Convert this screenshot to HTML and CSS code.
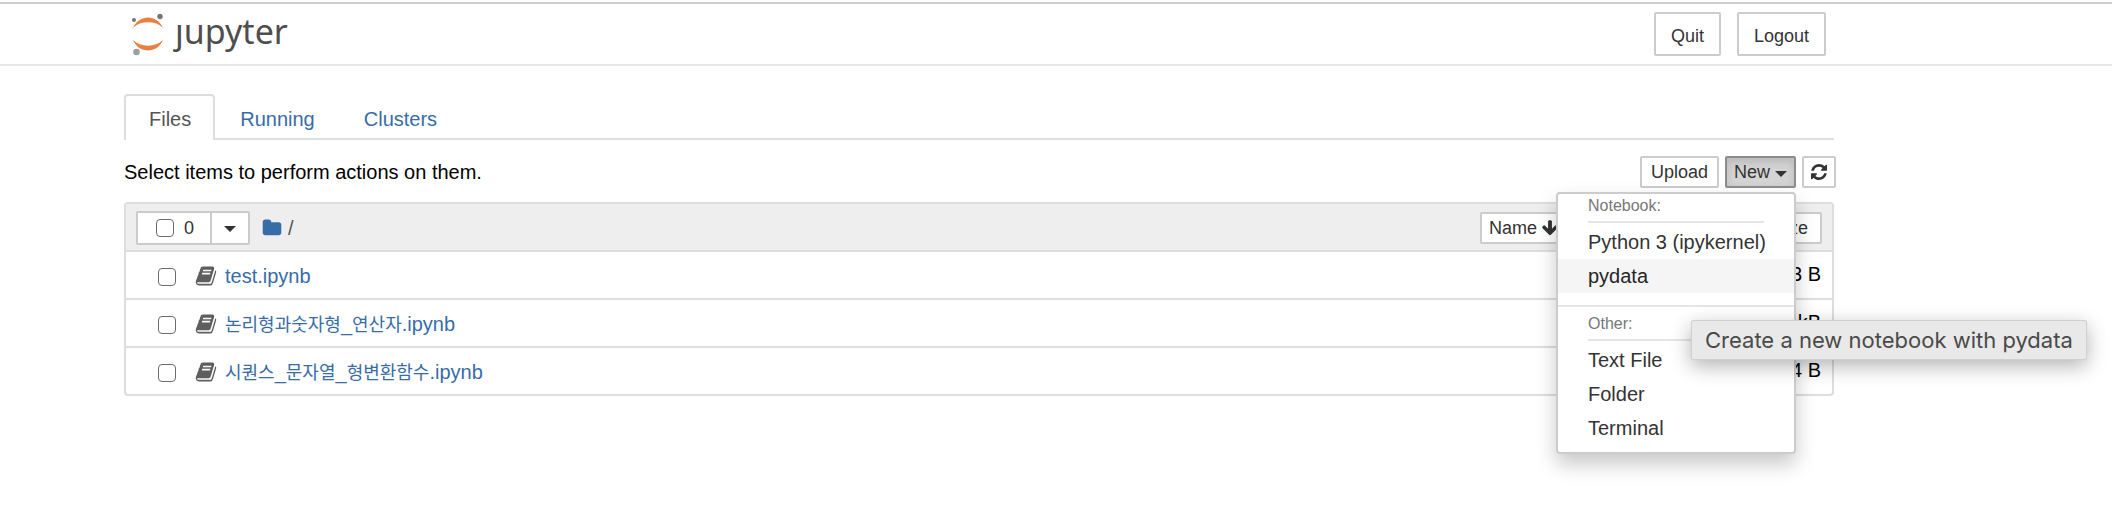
FILE: index.html
```html
<!DOCTYPE html>
<html lang="en">
<head>
<meta charset="utf-8">
<title>Home Page - Select or create a notebook</title>
<link rel="stylesheet" href="styles.css">
</head>
<body>
<svg class="sprite" aria-hidden="true">
  <symbol id="book" viewBox="0 0 1792 1792"><path d="M1703 478q40 57 18 129l-275 906q-19 64-76.500 107.500t-122.500 43.500h-923q-77 0-148.500-53.500t-99.500-131.500q-24-67-2-127 0-4 3-27t4-37q1-8-3-21.500t-3-19.500q2-11 8-21t16.500-23.500 16.500-23.500q23-38 45-91.500t30-91.500q3-10 .5-30t-.5-28q3-11 17-28t17-23q21-36 42-92t25-90q1-9-2.500-32t.5-28q4-13 22-30.500t22-22.500q19-26 42.500-84.500t27.500-96.500q1-8-3-25.500t-2-26.500q2-8 9-18t18-23 17-21q8-12 16.500-30.500t15-35 16-36 19.500-32 26.500-23.500 36-11.500 47.500 5.500l-1 3q38-9 51-9h761q74 0 114 56t18 130l-274 906q-36 119-71.500 153.500t-128.500 34.500h-869q-27 0-38 15-11 16-1 43 24 70 144 70h923q29 0 56-15.500t35-41.500l300-987q7-22 5-57 38 15 59 43zm-1064 2q-4 13 2 22.500t20 9.500h608q13 0 25.500-9.500t16.500-22.500l21-64q4-13-2-22.500t-20-9.500h-608q-13 0-25.500 9.500t-16.500 22.500zm-83 256q-4 13 2 22.500t20 9.500h608q13 0 25.500-9.500t16.500-22.500l21-64q4-13-2-22.500t-20-9.500h-608q-13 0-25.500 9.500t-16.500 22.500z"/></symbol>
</svg>

<header class="header">
  <a class="logo" href="#" aria-label="jupyter">
    <svg class="logo-mark" viewBox="0 0 34 44" aria-hidden="true">
      <path fill="#e78040" d="M2 15C5 8 11 4.500 17 4.500S29 8 32 15C28 11 23 9.300 17 9.300S6 11 2 15Z"/>
      <path fill="#e78040" d="M2 27C5 34 11 37.500 17 37.500S29 34 32 27C28 31 23 32.700 17 32.700S6 31 2 27Z"/>
      <circle cx="3" cy="7" r="2" fill="#767677"/>
      <circle cx="29" cy="3.500" r="2.700" fill="#767677"/>
      <circle cx="5.500" cy="39" r="3.300" fill="#9e9e9e"/>
    </svg>
    <span class="logo-word">ȷupyter</span>
  </a>
  <div class="header-actions">
    <button class="btn btn-large" type="button">Quit</button>
    <button class="btn btn-large" type="button">Logout</button>
  </div>
</header>

<main class="content">
  <nav class="tabs">
    <a class="tab tab-active" href="#files">Files</a>
    <a class="tab" href="#running">Running</a>
    <a class="tab" href="#clusters">Clusters</a>
  </nav>

  <div class="toolbar">
    <p class="hint">Select items to perform actions on them.</p>
    <div class="toolbar-actions">
      <button class="btn btn-upload" type="button">Upload</button>
      <div class="dropdown">
        <button class="btn btn-open" type="button" aria-expanded="true">New<span class="caret"></span></button>
        <div class="menu">
          <div class="menu-title">Notebook:</div>
          <a class="menu-item" href="#">Python 3 (ipykernel)</a>
          <a class="menu-item menu-hover" href="#">pydata<span class="tooltip" role="tooltip">Create a new notebook with pydata</span></a>
          <div class="menu-divider"></div>
          <div class="menu-title">Other:</div>
          <a class="menu-item" href="#">Text File</a>
          <a class="menu-item" href="#">Folder</a>
          <a class="menu-item" href="#">Terminal</a>
        </div>
      </div>
      <button class="btn btn-icon" type="button" aria-label="Refresh">
        <svg width="16" height="16" viewBox="0 0 1536 1536" fill="currentColor"><path d="M1511 928q0 5-1 7-64 268-268 434.500T764 1536q-146 0-282.500-55T238 1324l-129 129q-19 19-45 19t-45-19-19-45V960q0-26 19-45t45-19h448q26 0 45 19t19 45-19 45l-137 137q71 66 161 102t187 36q134 0 250-65t186-179q11-17 53-117 8-23 30-23h192q13 0 22.500 9.500t9.500 22.500zm25-800v448q0 26-19 45t-45 19h-448q-26 0-45-19t-19-45 19-45l138-138Q969 256 768 256q-134 0-250 65T332 500q-11 17-53 117-8 23-30 23H50q-13 0-22.500-9.500T18 608v-7q65-268 270-434.500T768 0q146 0 284 55.500T1297 212l130-129q19-19 45-19t45 19 19 45z"/></svg>
      </button>
    </div>
  </div>

  <section class="list">
    <div class="row list-header">
      <div class="selector">
        <label class="select-all"><input class="check" type="checkbox">0</label>
        <button class="select-menu" type="button" aria-label="Select by type"><span class="caret"></span></button>
      </div>
      <a class="crumb" href="#" aria-label="Home">
        <svg width="20" height="20" viewBox="0 0 1792 1792" fill="currentColor"><path d="M1728 608v704q0 92-66 158t-158 66h-1216q-92 0-158-66t-66-158v-960q0-92 66-158t158-66h320q92 0 158 66t66 158v32h672q92 0 158 66t66 158z"/></svg>
      </a>
      <span class="slash">/</span>
      <div class="sorts">
        <button class="btn sort-name" type="button">Name <svg width="18" height="18" viewBox="0 0 1792 1792" fill="currentColor"><path d="M1675 832q0 53-37 90l-651 652q-39 37-91 37-53 0-90-37l-651-652q-38-36-38-90 0-53 38-91l74-75q39-37 91-37 53 0 90 37l294 294v-704q0-52 38-90t90-38h128q52 0 90 38t38 90v704l294-294q37-37 90-37 52 0 91 37l75 75q37 39 37 91z"/></svg></button>
        <button class="btn sort-size" type="button">File size</button>
      </div>
    </div>
    <div class="row">
      <input class="check" type="checkbox" aria-label="Select test.ipynb">
      <svg class="book"><use href="#book"/></svg>
      <a class="file" href="#">test.ipynb</a>
      <span class="size">3 B</span>
    </div>
    <div class="row">
      <input class="check" type="checkbox" aria-label="Select 논리형과숫자형_연산자.ipynb">
      <svg class="book"><use href="#book"/></svg>
      <a class="file" href="#"><span class="hangul" lang="ko">논리형과숫자형</span>_<span class="hangul" lang="ko">연산자</span>.ipynb</a>
      <span class="size">kB</span>
    </div>
    <div class="row">
      <input class="check" type="checkbox" aria-label="Select 시퀀스_문자열_형변환함수.ipynb">
      <svg class="book"><use href="#book"/></svg>
      <a class="file" href="#"><span class="hangul" lang="ko">시퀀스</span>_<span class="hangul" lang="ko">문자열</span>_<span class="hangul" lang="ko">형변환함수</span>.ipynb</a>
      <span class="size">4 B</span>
    </div>
  </section>
</main>
</body>
</html>
```
FILE: styles.css
```css
* { box-sizing: border-box; }

body {
  min-height: 100vh;
  margin: 0;
  padding-top: 2px;
  background: #fff;
  color: #000;
  font: 20px/28px "Liberation Sans", "Noto Sans CJK KR", sans-serif;
}

a { color: #386ca7; text-decoration: none; }

.sprite { position: absolute; width: 0; height: 0; }

.header {
  display: flex;
  align-items: flex-start;
  justify-content: space-between;
  height: 64px;
  padding: 8px 286px 0 131px;
  border-top: 2px solid #ccc;
  border-bottom: 2px solid #e7e7e7;
}

.logo { display: flex; color: #4e4e4e; }
.logo-mark { width: 34px; height: 44px; margin-top: 1px; }
.logo-word {
  margin-left: 10px;
  font: 34px/38px "Noto Sans", sans-serif;
}
.header-actions { display: flex; gap: 16px; }

.btn {
  display: flex;
  align-items: center;
  height: 32px;
  padding: 0 8px;
  border: 2px solid #ccc;
  border-radius: 2px;
  background: #fff;
  color: #333;
  font: 18px/28px "Liberation Sans", sans-serif;
  white-space: nowrap;
}
.btn-large { height: 44px; padding: 4px 15px 0; }
.btn-upload { padding: 0 9px; }
.btn-icon { padding: 0 7px; }
.btn-open {
  padding: 0 7px;
  border-color: #8c8c8c;
  background: #d4d4d4;
  box-shadow: inset 0 4px 8px rgba(0, 0, 0, .13);
}

.caret {
  border: 6px solid transparent;
  border-top-color: currentColor;
  border-bottom: 0;
}
.btn .caret { margin: 4px 0 0 5px; }

.content { padding: 28px 278px 40px 124px; }

.tabs { display: flex; border-bottom: 2px solid #ddd; }
.tab {
  height: 44px;
  padding: 9px 22px 0 23px;
  border: 2px solid transparent;
  border-bottom: 0;
}
.tab-active {
  height: 46px;
  margin-bottom: -2px;
  border-color: #ddd;
  border-radius: 4px 4px 0 0;
  background: #fff;
  color: #555;
}

.toolbar {
  display: flex;
  align-items: center;
  justify-content: space-between;
  margin: 16px -2px 14px 0;
}
.hint { margin: 0; }
.toolbar-actions { display: flex; gap: 6px; }

.dropdown { position: relative; }
.menu {
  position: absolute;
  z-index: 2;
  top: 36px;
  right: 0;
  width: 240px;
  padding-bottom: 7px;
  border: 2px solid #ccc;
  border-radius: 4px;
  background: #fff;
  box-shadow: 0 10px 20px rgba(0, 0, 0, .22);
}
.menu-title {
  height: 29px;
  margin: 0 30px 2px;
  border-bottom: 2px solid #e5e5e5;
  color: #777;
  font-size: 16px;
  line-height: 24px;
}
.menu-item {
  display: block;
  position: relative;
  padding: 3px 30px;
  color: #333;
  white-space: nowrap;
}
.menu-hover { background: #f5f5f5; color: #262626; }
.menu-divider { height: 2px; margin: 12px 0 5px; background: #e5e5e5; }

.tooltip {
  position: absolute;
  z-index: 3;
  top: 61px;
  left: 133px;
  padding: 6px 13px;
  border: 1px solid #d0d0d0;
  border-radius: 2px;
  background: #e9e9e9;
  box-shadow: 0 6px 20px rgba(0, 0, 0, .3);
  color: #4a4a4a;
  font: 22px/26px Inter, sans-serif;
}

.list { border: 2px solid #ddd; border-radius: 4px; }
.row {
  display: flex;
  align-items: center;
  height: 48px;
  padding: 2px 11px 0 32px;
  border-bottom: 2px solid #ddd;
}
.row:last-child { height: 46px; border-bottom: 0; }
.list-header { padding: 2px 10px 0; background: #eee; }

.check {
  appearance: none;
  width: 18px;
  height: 18px;
  margin: 2px 0 0;
  border: 1px solid #6b6b6b;
  border-radius: 4px;
  background: #fff;
}
.book { width: 22px; height: 22px; margin: 0 8px 0 19px; fill: #5e5e5e; }
.hangul { font-size: 18px; }
.size { margin-left: auto; padding-bottom: 4px; }

.selector {
  display: flex;
  height: 34px;
  border: 2px solid #ccc;
  border-radius: 2px;
  background: #fff;
}
.select-all {
  display: flex;
  align-items: center;
  gap: 10px;
  padding: 0 16px 0 18px;
  color: #333;
  font-size: 18px;
}
.select-all .check { margin: 0; }
.select-menu {
  display: flex;
  align-items: center;
  padding: 2px 12px 0;
  border: 0;
  border-left: 2px solid #ccc;
  background: none;
  color: #333;
}
.crumb { display: flex; margin: 0 6px 0 12px; }
.slash { color: #555; }

.sorts { display: flex; justify-content: space-between; width: 342px; margin-left: auto; }
.sort-name { gap: 4px; padding: 0 7px; }
.sort-size { padding: 0 12px; }
```
